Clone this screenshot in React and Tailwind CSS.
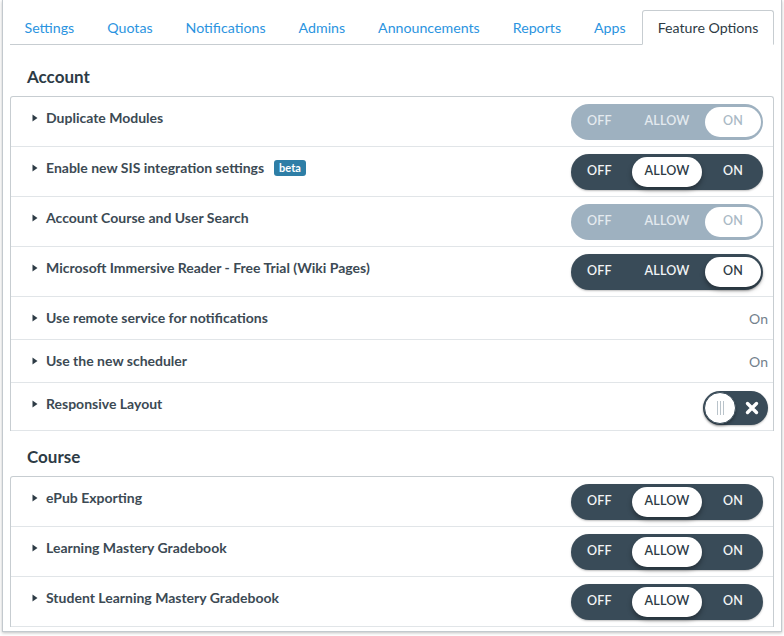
import React from "react";

const tabs = ["Settings", "Quotas", "Notifications", "Admins", "Announcements", "Reports", "Apps", "Feature Options"];

function Tri() {
  return (
    <svg width="6" height="8" viewBox="0 0 6 8" className="shrink-0">
      <path d="M0.5 0.5 L5.5 4 L0.5 7.5 Z" fill="#2D3B45" />
    </svg>
  );
}

function Tri3({ value, disabled }) {
  const segs = [
    { k: "off", label: "OFF", w: "w-[55px]" },
    { k: "allow", label: "ALLOW", w: "w-[70px]" },
    { k: "on", label: "ON", w: "w-[56px]" },
  ];
  return (
    <div
      className={
        "flex h-[36px] w-[192px] items-center gap-[3px] rounded-full pl-[1px] pr-[2px] " +
        (disabled ? "bg-[#9eb1c0]" : "bg-[#394b58] shadow-[0_1px_2px_rgba(0,0,0,0.25)]")
      }
    >
      {segs.map((s) => {
        const sel = s.k === value;
        return (
          <div
            key={s.k}
            className={
              "flex h-[30px] items-center justify-center rounded-full text-[12.5px] font-semibold tracking-[0.2px] " +
              s.w +
              " " +
              (s.k === "off" ? "mr-[2px] " : "") +
              (sel
                ? disabled
                  ? "bg-white text-[#a9b9c5]"
                  : "bg-white text-[#2d3b45] shadow-[0_3px_5px_rgba(0,0,0,0.35)]"
                : disabled
                ? "text-[#e4eaef]"
                : "text-[#f2f4f5]")
            }
          >
            {s.label}
          </div>
        );
      })}
    </div>
  );
}

function Switch() {
  return (
    <div className="flex h-[34px] w-[65px] items-center rounded-full bg-[#394b58] shadow-[0_1px_2px_rgba(0,0,0,0.25)]">
      <div className="ml-[1px] flex h-[32px] w-[32px] items-center justify-center gap-[2px] rounded-full border border-[#394b58] bg-white shadow-[0_2px_3px_rgba(0,0,0,0.3)]">
        <div className="h-[14px] w-[1px] bg-[#b9c3ca]" />
        <div className="h-[14px] w-[1px] bg-[#b9c3ca]" />
        <div className="h-[14px] w-[1px] bg-[#b9c3ca]" />
      </div>
      <div className="flex flex-1 items-center justify-center">
        <svg width="14" height="14" viewBox="0 0 14 14">
          <path d="M2.5 2.5 L11.5 11.5 M11.5 2.5 L2.5 11.5" stroke="white" strokeWidth="3.4" strokeLinecap="round" />
        </svg>
      </div>
    </div>
  );
}

function Row({ label, beta, h = "h-[50px]", right, last }) {
  return (
    <div className={"flex items-start justify-between pl-[21px] pr-[10px] " + h + (last ? "" : " border-b border-[#e1e5e8]")}>
      <div className="flex items-center gap-[8px] pt-[11px] leading-[20px]">
        <Tri />
        <span className="text-[14px] font-bold text-[#3c4a54]">{label}</span>
        {beta && (
          <span className="ml-[2px] rounded-[3px] bg-[#2e7ea6] px-[5px] text-[11px] font-bold leading-[16px] text-white">beta</span>
        )}
      </div>
      <div className="self-center">{right}</div>
    </div>
  );
}

function OnText() {
  return <div className="-mr-[5px] pt-[1px] text-[14px] text-[#73818c]">On</div>;
}

export default function App() {
  return (
    <div className="h-[636px] w-[784px] overflow-hidden bg-white" style={{ fontFamily: "Lato, 'Open Sans', sans-serif" }}>
      <div className="ml-[2px] h-[632px] w-[780px] overflow-hidden border-x border-b border-[#c3c9ce] bg-white shadow-[0_1px_3px_rgba(0,0,0,0.25)]">
        <div className="px-[7px]">
          <div className="flex border-b border-[#c7cdd1] pt-[10px]">
            <div className="-ml-[2px] flex">
              {tabs.map((t) => {
                const active = t === "Feature Options";
                return (
                  <div
                    key={t}
                    className={
                      "-mb-[1px] flex h-[35px] items-center whitespace-nowrap text-[14.2px] " +
                      (active
                        ? "rounded-t-[3px] border border-b-white border-[#c7cdd1] bg-white px-[14.5px] text-[#2d3b45]"
                        : "border border-transparent px-[15.5px] text-[#2b94e0]")
                    }
                  >
                    {t}
                  </div>
                );
              })}
            </div>
          </div>

          <div className="pl-[17px] pt-[21px] pb-[8px] text-[17px] font-bold leading-[22px] text-[#2d3b45]">Account</div>
          <div className="rounded-t-[3px] border-x border-t border-[#c7cdd1]">
            <Row label="Duplicate Modules" right={<Tri3 value="on" disabled />} />
            <Row label="Enable new SIS integration settings" beta right={<Tri3 value="allow" />} />
            <Row label="Account Course and User Search" right={<Tri3 value="on" disabled />} />
            <Row label="Microsoft Immersive Reader - Free Trial (Wiki Pages)" right={<Tri3 value="on" />} />
            <Row label="Use remote service for notifications" h="h-[43px]" right={<OnText />} />
            <Row label="Use the new scheduler" h="h-[43px]" right={<OnText />} />
            <Row label="Responsive Layout" h="h-[48px]" right={<div className="-mr-[5px] mt-[3px]"><Switch /></div>} />
          </div>

          <div className="pl-[17px] pt-[15px] pb-[8px] text-[17px] font-bold leading-[22px] text-[#2d3b45]">Course</div>
          <div className="rounded-t-[3px] border-x border-t border-[#c7cdd1]">
            <Row label="ePub Exporting" right={<Tri3 value="allow" />} />
            <Row label="Learning Mastery Gradebook" right={<Tri3 value="allow" />} />
            <Row label="Student Learning Mastery Gradebook" right={<Tri3 value="allow" />} />
          </div>
        </div>
      </div>
    </div>
  );
}
